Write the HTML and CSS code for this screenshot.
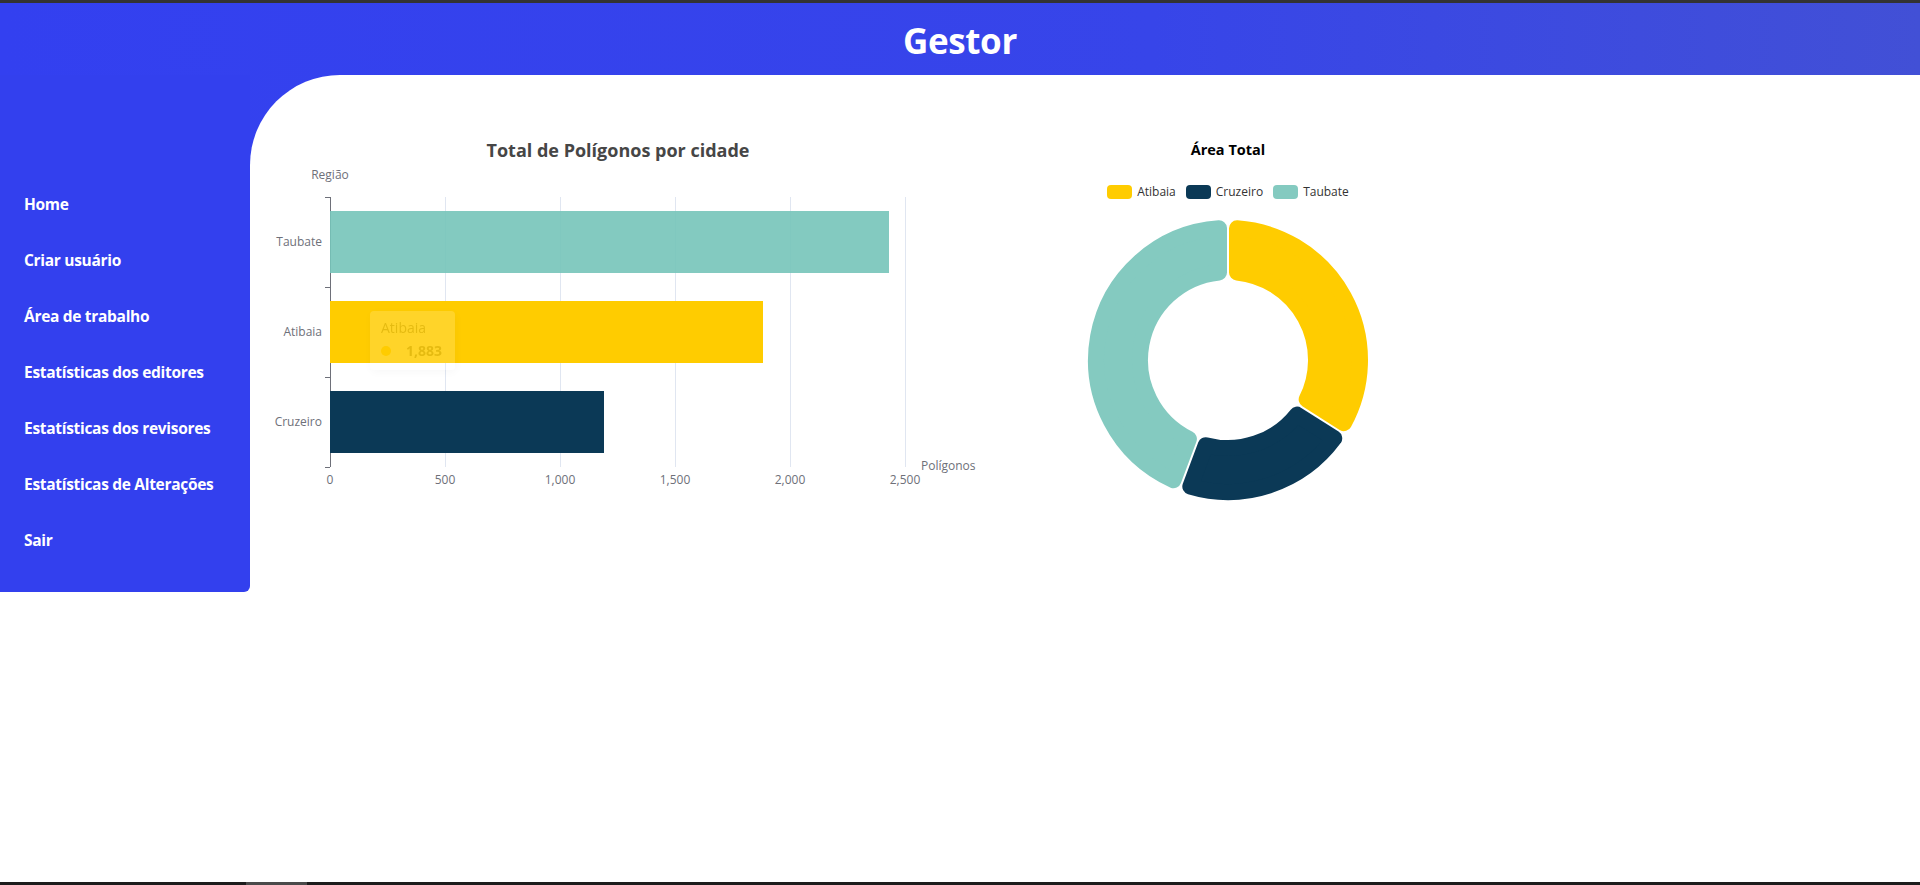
FILE: index.html
```html
<!DOCTYPE html>
<html lang="pt-BR">
<head>
<meta charset="utf-8">
<title>Gestor</title>
<link rel="stylesheet" href="styles.css">
</head>
<body>
<div class="topline"></div>
<header class="header"><h1 class="brand">Gestor</h1></header>
<div class="layout">
  <nav class="sidebar">
    <a class="nav-link" href="#">Home</a>
    <a class="nav-link" href="#">Criar usuário</a>
    <a class="nav-link" href="#">Área de trabalho</a>
    <a class="nav-link" href="#">Estatísticas dos editores</a>
    <a class="nav-link" href="#">Estatísticas dos revisores</a>
    <a class="nav-link" href="#">Estatísticas de Alterações</a>
    <a class="nav-link" href="#">Sair</a>
  </nav>
  <main class="main">
    <section class="bar-panel">
      <svg class="bar-chart" width="750" height="380" viewBox="0 0 750 380">
        <defs>
          <filter id="tipShadow" x="-30%" y="-30%" width="160%" height="160%">
            <feDropShadow dx="1" dy="2" stdDeviation="5" flood-color="#000" flood-opacity="0.2"/>
          </filter>
        </defs>
        <text class="chart-title" x="368" y="27" text-anchor="middle">Total de Polígonos por cidade</text>
        <text class="axis-name" x="80" y="49" text-anchor="middle">Região</text>
        <g class="grid">
          <line x1="195.5" y1="67" x2="195.5" y2="337"/>
          <line x1="310.5" y1="67" x2="310.5" y2="337"/>
          <line x1="425.5" y1="67" x2="425.5" y2="337"/>
          <line x1="540.5" y1="67" x2="540.5" y2="337"/>
          <line x1="655.5" y1="67" x2="655.5" y2="337"/>
        </g>
        <g class="axis">
          <line x1="80.5" y1="67" x2="80.5" y2="337"/>
          <line x1="75" y1="67.5" x2="80" y2="67.5"/>
          <line x1="75" y1="157.5" x2="80" y2="157.5"/>
          <line x1="75" y1="247.5" x2="80" y2="247.5"/>
          <line x1="75" y1="337.5" x2="80" y2="337.5"/>
        </g>
        <rect class="bar-taubate" x="80" y="81" width="559" height="62"/>
        <rect class="bar-atibaia" x="80" y="171" width="433" height="62"/>
        <rect class="bar-cruzeiro" x="80" y="261" width="274" height="62"/>
        <g class="axis-label">
          <text x="72" y="116" text-anchor="end">Taubate</text>
          <text x="72" y="206" text-anchor="end">Atibaia</text>
          <text x="72" y="296" text-anchor="end">Cruzeiro</text>
          <text x="80" y="354" text-anchor="middle">0</text>
          <text x="195" y="354" text-anchor="middle">500</text>
          <text x="310" y="354" text-anchor="middle">1,000</text>
          <text x="425" y="354" text-anchor="middle">1,500</text>
          <text x="540" y="354" text-anchor="middle">2,000</text>
          <text x="655" y="354" text-anchor="middle">2,500</text>
        </g>
        <text class="axis-name" x="671" y="340">Polígonos</text>
        <g class="tip" opacity="0.16">
          <rect x="120" y="181" width="85" height="59" rx="4" fill="#fff" filter="url(#tipShadow)"/>
          <text class="tip-name" x="131" y="203">Atibaia</text>
          <circle cx="136" cy="221" r="5" fill="#ffcc00"/>
          <text class="tip-value" x="156" y="226">1,883</text>
        </g>
      </svg>
    </section>
    <section class="pie-panel">
      <h2 class="pie-title">Área Total</h2>
      <div class="legend">
        <span class="legend-item"><span class="swatch swatch-atibaia"></span>Atibaia</span>
        <span class="legend-item"><span class="swatch swatch-cruzeiro"></span>Cruzeiro</span>
        <span class="legend-item"><span class="swatch swatch-taubate"></span>Taubate</span>
      </div>
      <svg class="donut" width="300" height="300" viewBox="0 0 300 300">
        <path class="seg seg-atibaia" d="M159.00 18.31 A132 132 0 0 1 265.91 213.17 L228.67 189.45 A88 88 0 0 0 159.00 62.46 Z"/>
        <path class="seg seg-cruzeiro" d="M256.24 228.36 A132 132 0 0 1 112.31 276.51 L127.77 235.15 A88 88 0 0 0 219.00 204.63 Z"/>
        <path class="seg seg-taubate" d="M95.45 270.20 A132 132 0 0 1 141.00 18.31 L141.00 62.46 A88 88 0 0 0 110.91 228.84 Z"/>
      </svg>
    </section>
  </main>
</div>
<div class="bottombar"><div class="bottombar-thumb"></div></div>
</body>
</html>
```
FILE: styles.css
```css
html, body {
  margin: 0;
  padding: 0;
}
body {
  font-family: "Open Sans", "Noto Sans", sans-serif;
  background: #fff;
  min-height: 100vh;
  display: flex;
  flex-direction: column;
  overflow: hidden;
}
.topline {
  height: 3px;
  background: #333;
  flex: none;
}
.header {
  height: 72px;
  flex: none;
  background: linear-gradient(90deg, #3340f0 0%, #3745e9 60%, #4250d6 100%);
  display: flex;
  align-items: center;
  justify-content: center;
}
.brand {
  margin: 0;
  padding-top: 3px;
  color: #fff;
  font-size: 35px;
  line-height: 36px;
  font-weight: 700;
  letter-spacing: -0.4px;
}
.layout {
  flex: 1;
  display: flex;
  align-items: flex-start;
  background: linear-gradient(90deg, #3340f0 0%, #3745e9 60%, #4250d6 100%) top left / 100% 100px no-repeat;
}
.sidebar {
  width: 250px;
  height: 517px;
  box-sizing: border-box;
  flex: none;
  background: #3340ee;
  border-bottom-right-radius: 6px;
  padding: 101px 0 24px;
}
.nav-link {
  display: block;
  padding-left: 24px;
  line-height: 56px;
  color: #fff;
  font-size: 15.5px;
  font-weight: 700;
  letter-spacing: -0.3px;
  text-decoration: none;
}
.main {
  flex: 1;
  align-self: stretch;
  background: #fff;
  border-top-left-radius: 90px;
  display: flex;
  align-items: flex-start;
  gap: 28px;
  padding-top: 55px;
}
.bar-panel {
  width: 750px;
  height: 380px;
  flex: none;
}
.bar-chart {
  display: block;
}
.chart-title {
  font-size: 18px;
  font-weight: 700;
  fill: #464646;
}
.axis-name, .axis-label text {
  font-size: 12px;
  fill: #6e7079;
}
.grid line {
  stroke: #e0e6f1;
  stroke-width: 1;
}
.axis line {
  stroke: #6e7079;
  stroke-width: 1;
}
.bar-taubate { fill: rgba(118, 196, 185, 0.9); }
.bar-atibaia { fill: #ffcc00; }
.bar-cruzeiro { fill: #0b3956; }
.tip-name {
  font-size: 14px;
  fill: #666;
}
.tip-value {
  font-size: 14px;
  font-weight: 700;
  fill: #666;
}
.pie-panel {
  width: 400px;
  flex: none;
  display: flex;
  flex-direction: column;
  align-items: center;
}
.pie-title {
  margin: 0;
  font-size: 14.5px;
  line-height: 40px;
  font-weight: 700;
  color: #000;
}
.legend {
  display: flex;
  gap: 10px;
  margin-top: 15px;
  height: 14px;
  align-items: center;
}
.legend-item {
  display: flex;
  align-items: center;
  gap: 5px;
  font-size: 12px;
  line-height: 14px;
  color: #333;
}
.swatch {
  width: 25px;
  height: 14px;
  border-radius: 4px;
}
.swatch-atibaia { background: #ffcc00; }
.swatch-cruzeiro { background: #0b3956; }
.swatch-taubate { background: #84cac0; }
.donut {
  display: block;
  margin-top: 11px;
}
.seg {
  stroke-width: 16;
  stroke-linejoin: round;
}
.seg-atibaia { fill: #ffcc00; stroke: #ffcc00; }
.seg-cruzeiro { fill: #0b3956; stroke: #0b3956; }
.seg-taubate { fill: #84cac0; stroke: #84cac0; }
.bottombar {
  height: 3px;
  flex: none;
  background: #1c1c1c;
}
.bottombar-thumb {
  margin-left: 246px;
  width: 61px;
  height: 3px;
  background: #4a4a4a;
}
```
